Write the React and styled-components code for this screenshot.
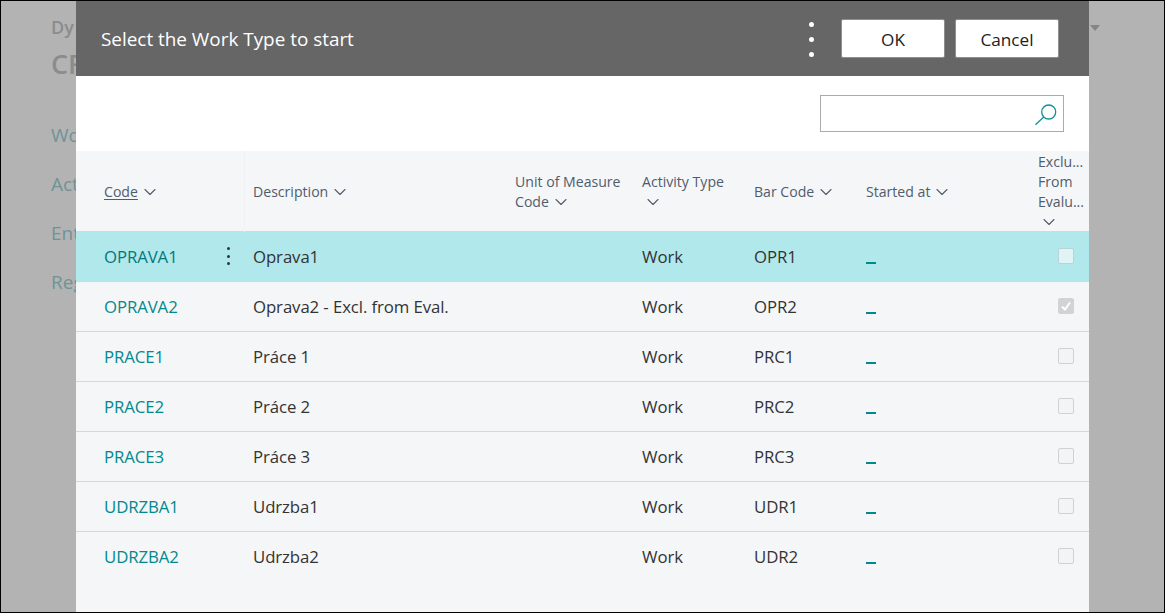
import React from 'react'
import styled, { createGlobalStyle } from 'styled-components'
import { ChevronDown } from 'lucide-react'

const GlobalStyle = createGlobalStyle`
  html, body {
    margin: 0;
    padding: 0;
    height: 100%;
    overflow: hidden;
  }
  body {
    font-family: "Open Sans", "Noto Sans", "Liberation Sans", sans-serif;
  }
`

const Page = styled.div`
  position: relative;
  width: 1165px;
  height: 613px;
  box-sizing: border-box;
  border: 1px solid #000;
  background: #b3b3b3;
  overflow: hidden;
`

const BackPage = styled.div`
  padding: 15px 0 0 50px;
  display: flex;
  flex-direction: column;
  color: #8a8d8d;
`

const BackTitle = styled.div`
  font-size: 18px;
  font-weight: 600;
  line-height: 22px;
`

const BackHeading = styled.div`
  font-size: 27px;
  font-weight: 600;
  line-height: 34px;
  margin-top: 9px;
  margin-bottom: 42px;
`

const BackLink = styled.div`
  font-size: 19px;
  line-height: 24px;
  height: 49px;
  color: #6f9496;
`

const BackArrow = styled.div`
  position: absolute;
  top: 24px;
  left: 1089px;
  width: 0;
  height: 0;
  border-left: 5px solid transparent;
  border-right: 5px solid transparent;
  border-top: 6px solid #858585;
`

const Dialog = styled.div`
  position: absolute;
  top: 0;
  left: 75px;
  width: 1013px;
  height: 612px;
  background: #f5f6f8;
  display: flex;
  flex-direction: column;
`

const Header = styled.div`
  height: 75px;
  flex: none;
  background: #666;
  display: flex;
  align-items: center;
  padding: 0 30px 0 25px;
`

const Title = styled.div`
  flex: 1;
  color: #fff;
  font-size: 18.9px;
  line-height: 24px;
  margin-top: 1px;
`

const Dots = styled.div`
  display: flex;
  flex-direction: column;
  gap: 10px;
  margin-right: 17px;
  margin-top: 2px;
`

const Dot = styled.span`
  width: 5px;
  height: 5px;
  border-radius: 50%;
  background: #fff;
`

const Button = styled.button`
  width: 104px;
  height: 39px;
  margin-left: 10px;
  box-sizing: border-box;
  background: #fff;
  border: 1px solid #8f8f8f;
  border-radius: 2px;
  color: #212121;
  font-family: inherit;
  font-size: 17.2px;
  padding: 2px 0 0;
`

const SearchBar = styled.div`
  height: 75px;
  flex: none;
  background: #fff;
  display: flex;
  align-items: flex-start;
  justify-content: flex-end;
  padding: 19px 25px 0 0;
  box-sizing: border-box;
`

const SearchBox = styled.div`
  width: 244px;
  height: 37px;
  box-sizing: border-box;
  border: 1px solid #ababab;
  display: flex;
  align-items: center;
  justify-content: flex-end;
  padding-right: 6px;
`

const Row = styled.div`
  display: grid;
  grid-template-columns: 169px 262px 127px 112px 112px 172px 59px;
  height: ${({ $head }) => ($head ? '81px' : '50px')};
  box-sizing: border-box;
  flex: none;
  background: ${({ $selected }) => ($selected ? '#b1e8eb' : 'transparent')};
  border-bottom: 1px solid ${({ $selected }) => ($selected ? '#cfdadb' : '#d6d7d8')};

  &:last-child {
    border-bottom-color: transparent;
  }
`

const HeadCell = styled.div`
  box-sizing: border-box;
  display: flex;
  align-items: center;
  padding-left: 8px;
  color: #505c6d;
  font-size: 14.1px;
  line-height: 20px;

  &:first-child {
    padding-left: 28px;
    border-right: 1px solid #f0f1f3;
  }
`

const HeadText = styled.div`
  white-space: normal;
`

const StackedText = styled(HeadText)`
  margin-top: 1px;
`

const CodeLabel = styled.span`
  text-decoration: underline;
  text-underline-offset: 2px;
`

const Chevron = styled(ChevronDown)`
  display: inline-block;
  vertical-align: -5px;
  margin-left: 2px;
  color: #505c6d;
`

const StackChevron = styled(ChevronDown)`
  display: block;
  margin: 0 0 0 1px;
  color: #505c6d;
`

const Cell = styled.div`
  display: flex;
  align-items: center;
  padding: 0 0 1px 8px;
  box-sizing: border-box;
  color: #333;
  font-size: 16.8px;
  letter-spacing: -0.1px;
`

const CodeCell = styled(Cell)`
  padding-left: 28px;
  padding-right: 15px;
  justify-content: space-between;
  color: ${({ $selected }) => ($selected ? '#00787c' : '#00898e')};
`

const RowDots = styled.div`
  display: flex;
  flex-direction: column;
  gap: 4.5px;
`

const RowDot = styled.span`
  width: 3px;
  height: 3px;
  border-radius: 50%;
  background: #333;
`

const UnderscoreMark = styled.span`
  display: block;
  width: 10px;
  height: 1.5px;
  background: #00898e;
  margin-top: 14px;
`

const CheckCell = styled.div`
  display: flex;
  align-items: center;
  padding-left: 28px;
  margin-top: -2px;
`

const CheckBox = styled.div`
  width: 16px;
  height: 16px;
  box-sizing: border-box;
  border-radius: 2px;
  display: flex;
  align-items: center;
  justify-content: center;
  background: ${({ $checked, $selected }) =>
    $checked ? '#d2d3d4' : $selected ? '#e1f3f5' : '#f3f4f6'};
  border: 1px solid ${({ $checked, $selected }) =>
    $checked ? '#d2d3d4' : $selected ? '#bcd3d6' : '#d0d1d3'};
`

const rows = [
  { code: 'OPRAVA1', desc: 'Oprava1', bar: 'OPR1', selected: true },
  { code: 'OPRAVA2', desc: 'Oprava2 - Excl. from Eval.', bar: 'OPR2', checked: true },
  { code: 'PRACE1', desc: 'Práce 1', bar: 'PRC1' },
  { code: 'PRACE2', desc: 'Práce 2', bar: 'PRC2' },
  { code: 'PRACE3', desc: 'Práce 3', bar: 'PRC3' },
  { code: 'UDRZBA1', desc: 'Udrzba1', bar: 'UDR1' },
  { code: 'UDRZBA2', desc: 'Udrzba2', bar: 'UDR2' },
]

const SortIcon = () => <Chevron size={20} strokeWidth={1.3} />

const App = () => (
  <Page>
    <GlobalStyle />
    <BackPage>
      <BackTitle>Dy</BackTitle>
      <BackHeading>CR</BackHeading>
      <BackLink>Wo</BackLink>
      <BackLink>Act</BackLink>
      <BackLink>Ent</BackLink>
      <BackLink>Reg</BackLink>
    </BackPage>
    <BackArrow />
    <Dialog>
      <Header>
        <Title>Select the Work Type to start</Title>
        <Dots>
          <Dot />
          <Dot />
          <Dot />
        </Dots>
        <Button>OK</Button>
        <Button>Cancel</Button>
      </Header>
      <SearchBar>
        <SearchBox>
          <svg width="24" height="24" viewBox="0 0 24 24" fill="none" stroke="#0f9097" strokeWidth="1.3">
            <circle cx="15.7" cy="10" r="7" />
            <path d="M10.7 15 L2.5 22.7" />
          </svg>
        </SearchBox>
      </SearchBar>
      <Row $head>
        <HeadCell>
          <HeadText>
            <CodeLabel>Code</CodeLabel>
            <SortIcon />
          </HeadText>
        </HeadCell>
        <HeadCell>
          <HeadText>
            Description
            <SortIcon />
          </HeadText>
        </HeadCell>
        <HeadCell>
          <HeadText>
            Unit of Measure
            <br />
            Code
            <SortIcon />
          </HeadText>
        </HeadCell>
        <HeadCell>
          <StackedText>
            Activity Type
            <StackChevron size={20} strokeWidth={1.3} />
          </StackedText>
        </HeadCell>
        <HeadCell>
          <HeadText>
            Bar Code
            <SortIcon />
          </HeadText>
        </HeadCell>
        <HeadCell>
          <HeadText>
            Started at
            <SortIcon />
          </HeadText>
        </HeadCell>
        <HeadCell>
          <StackedText>
            Exclu...
            <br />
            From
            <br />
            Evalu...
            <StackChevron size={20} strokeWidth={1.3} />
          </StackedText>
        </HeadCell>
      </Row>
      {rows.map((row) => (
        <Row key={row.code} $selected={row.selected}>
          <CodeCell $selected={row.selected}>
            {row.code}
            {row.selected && (
              <RowDots>
                <RowDot />
                <RowDot />
                <RowDot />
              </RowDots>
            )}
          </CodeCell>
          <Cell>{row.desc}</Cell>
          <Cell />
          <Cell>Work</Cell>
          <Cell>{row.bar}</Cell>
          <Cell>
            <UnderscoreMark />
          </Cell>
          <CheckCell>
            <CheckBox $checked={row.checked} $selected={row.selected}>
              {row.checked && (
                <svg width="12" height="12" viewBox="0 0 12 12" fill="none" stroke="#fff" strokeWidth="2">
                  <path d="M2 6.5 L5 9.5 L10 2.5" />
                </svg>
              )}
            </CheckBox>
          </CheckCell>
        </Row>
      ))}
    </Dialog>
  </Page>
)

export default App
